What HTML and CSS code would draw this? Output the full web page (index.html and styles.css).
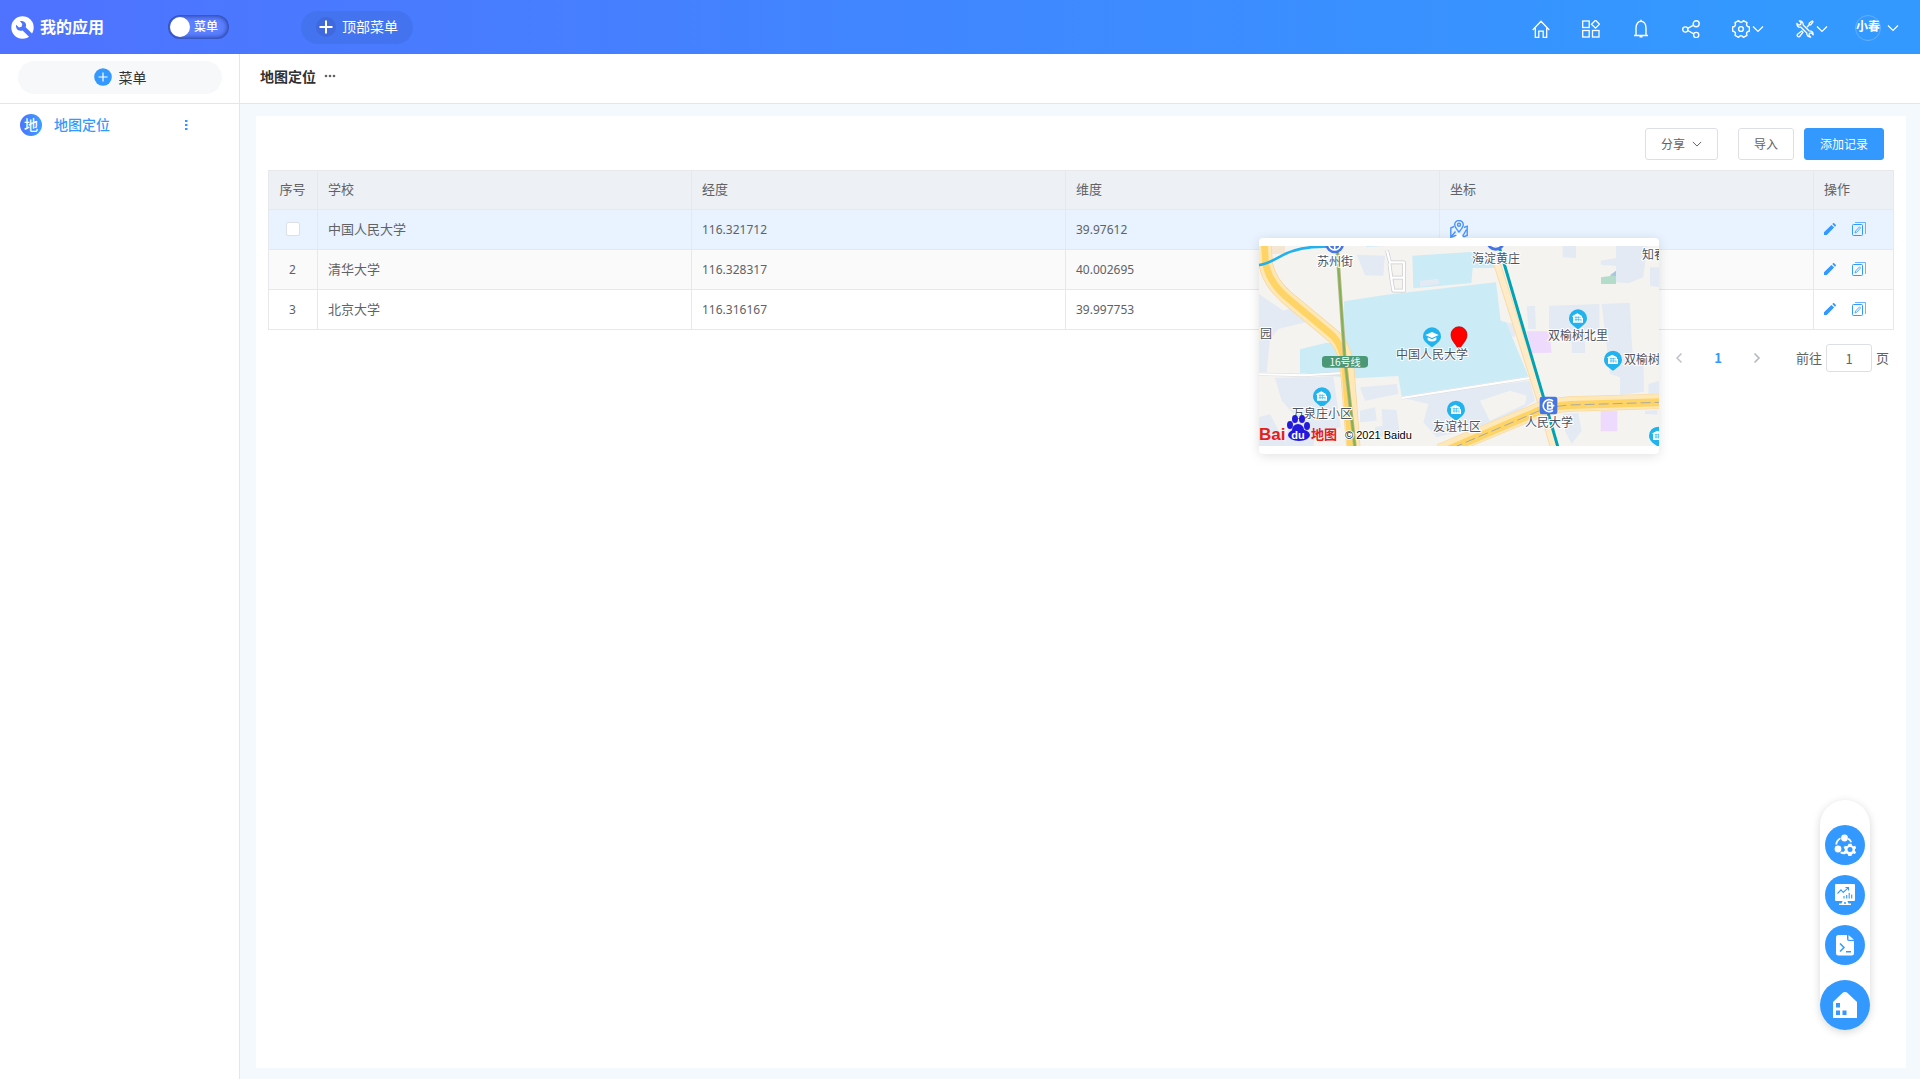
FILE: index.html
```html
<!DOCTYPE html>
<html lang="zh-CN">
<head>
<meta charset="utf-8">
<title>我的应用</title>
<link rel="stylesheet" href="styles.css">
</head>
<body>
<svg class="defs" aria-hidden="true">
  <symbol id="i-chevron" viewBox="0 0 12 12"><path d="M1 3.5 6 8.5 11 3.5" fill="none" stroke="currentColor" stroke-width="1.2"/></symbol>
  <symbol id="i-pencil" viewBox="0 0 12 12"><path d="M0 12V9.2L7.4 1.9 10.100 4.600 2.800 12zM8.300 1 9 .3Q9.600-.2 10.200.3L11.700 1.800Q12.200 2.400 11.700 3L11 3.700z" fill="currentColor"/></symbol>
  <symbol id="i-copy" viewBox="0 0 14 14"><g fill="none" stroke="currentColor"><path d="M3 .5h10.500v11.500" opacity=".7"/><rect x=".5" y="2.500" width="10" height="11" rx="1"/><path d="M3 11 3.600 9 7.500 4.800 8.600 5.900 4.800 10.200z" stroke-width=".8"/></g></symbol>
  <symbol id="i-build" viewBox="-28 -28 56 62"><path d="M-27 0A27 27 0 1 1 27 0C27 16 12 24 0 33-12 24-27 16-27 0z" fill="#22b3ee"/><path d="M-17-7-2-15 12-7V-2H15V13H-15V-5H-17z" fill="#fff"/><path d="M-10-3H8M-10 4H8M-6-6V9M1-6V9M9 2V9" stroke="#22b3ee" stroke-width="2"/></symbol>
</svg>

<header class="topbar">
  <div class="brand">
    <svg width="23" height="23" viewBox="0 0 23 23"><circle cx="11.500" cy="11.500" r="11.200" fill="#fff"/><path d="M9 5.200C11.500 4.300 14.500 5.700 15 8.600Q15.200 10 14.700 11.200L22 18.500 18.800 21.600 11.600 14.500C8.500 15.700 5.200 13.500 5 10.400Q5 9.500 5.200 8.700L8 11.400 10.600 10.700 11.300 8z" fill="#4e74ff"/></svg>
    <span class="brand-name">我的应用</span>
  </div>
  <button class="toggle" type="button"><span class="knob"></span><span class="label">菜单</span></button>
  <button class="top-menu" type="button">
    <span class="plus-dark"><svg width="14" height="14" viewBox="0 0 14 14"><path d="M7 .5v13M.5 7h13" stroke="#fff" stroke-width="2"/></svg></span><span class="label">顶部菜单</span>
  </button>
  <nav class="tools">
    <button type="button" aria-label="首页"><svg width="18" height="20" viewBox="0 0 18 20"><path d="M.7 11 9 2.200 17.300 11M3.300 9V18.300H6.800V12.200H11.200V18.300H14.700V9" fill="none" stroke="#fff" stroke-width="1.300"/></svg></button>
    <button type="button" aria-label="应用"><svg width="18" height="18" viewBox="0 0 18 18"><g fill="none" stroke="#fff" stroke-width="1.300"><rect x=".7" y="1" width="6.500" height="6.500"/><rect x=".7" y="10.500" width="6.500" height="6.500"/><rect x="10.500" y="10.500" width="6.500" height="6.500"/><path d="M13.500.2 17.500 4.200 13.500 8.200 9.500 4.200z"/></g></svg></button>
    <button type="button" aria-label="通知"><svg width="18" height="20" viewBox="0 0 18 20"><path d="M4 16V9C4 0 14 0 14 9V16M2 16.500H16M9 .8V3M7.500 17.800H10.500" fill="none" stroke="#fff" stroke-width="1.400"/></svg></button>
    <button type="button" aria-label="分享"><svg width="18" height="18" viewBox="0 0 18 18"><g fill="none" stroke="#fff" stroke-width="1.400"><circle cx="3.300" cy="9.500" r="2.600"/><circle cx="14.200" cy="3.800" r="3"/><circle cx="14.200" cy="15" r="2.600"/><path d="M5.700 8.300 11.600 5.200M5.800 10.500 11.800 13.800"/></g></svg></button>
    <button type="button" aria-label="设置"><svg width="18" height="18" viewBox="0 0 18 18"><path d="M11.400.7 15 2.700Q13.500 6.300 17.400 7V11Q13.500 11.700 15 15.300L11.400 17.300Q9 14.200 6.600 17.300L3 15.300Q4.500 11.700.6 11V7Q4.500 6.300 3 2.700L6.600.7Q9 3.800 11.400.7z" fill="none" stroke="#fff" stroke-width="1.400" stroke-linejoin="round"/><circle cx="9" cy="9" r="2.400" fill="none" stroke="#fff" stroke-width="1.400"/></svg><svg width="12" height="12"><use href="#i-chevron"/></svg></button>
    <button type="button" aria-label="工具"><svg width="18" height="18" viewBox="0 0 18 18"><g fill="none" stroke="#fff" stroke-width="1.300" stroke-linejoin="round"><path d="M3.300.9 5.200 2.800 4.600 4.600 2.800 5.200.9 3.400Q.5 7.500 5 7.200L10.800 13Q10.800 17.300 14.700 17.100L12.900 15.300 13.400 13.400 15.300 12.900 17.100 14.700Q17.400 10.700 13 10.800L7.200 5Q7.200.8 3.300.9z"/><path d="M11 7.200 13.200 4.800V3.300L16.200 1 17 1.800 14.700 4.800H13.200"/><path d="M5.800 11 7 12.200 3.700 16.500Q2.600 17.400 1.600 16.400 .6 15.400 1.500 14.300z"/></g></svg><svg width="12" height="12"><use href="#i-chevron"/></svg></button>
  </nav>
  <button class="user" type="button"><span class="avatar">小春</span><svg width="12" height="12"><use href="#i-chevron"/></svg></button>
</header>

<div class="layout">
  <aside class="sidebar">
    <div class="side-head">
      <button class="add-menu" type="button"><svg width="18" height="18" viewBox="0 0 18 18"><circle cx="9" cy="9" r="8.800" fill="#39f"/><path d="M9 4.500v9M4.500 9h9" stroke="#fff" stroke-width="1.200"/></svg>菜单</button>
    </div>
    <div class="side-item">
      <span class="side-badge">地</span>
      <a href="#map">地图定位</a>
      <button class="plain" type="button" aria-label="更多"><svg width="4" height="12" viewBox="0 0 4 12"><g fill="#39f"><rect x="1" y="1" width="2.500" height="2"/><rect x="1" y="5" width="2.500" height="2"/><rect x="1" y="9" width="2.500" height="2"/></g></svg></button>
    </div>
  </aside>

  <main class="main">
    <div class="tabbar">
      <h1>地图定位</h1>
      <button class="plain" type="button" aria-label="更多"><svg width="12" height="4" viewBox="0 0 12 4"><g fill="#606266"><circle cx="2" cy="2" r="1.300"/><circle cx="6" cy="2" r="1.300"/><circle cx="10" cy="2" r="1.300"/></g></svg></button>
    </div>
    <div class="content">
      <section class="card" id="map">
        <div class="actions">
          <button class="btn share" type="button">分享<svg width="10" height="10"><use href="#i-chevron"/></svg></button>
          <button class="btn" type="button">导入</button>
          <button class="btn primary" type="button">添加记录</button>
        </div>
        <table class="grid">
          <colgroup><col class="c-no"><col><col><col><col><col class="c-op"></colgroup>
          <thead><tr><th class="no">序号</th><th>学校</th><th>经度</th><th>维度</th><th>坐标</th><th>操作</th></tr></thead>
          <tbody>
            <tr class="hover">
              <td class="no"><input type="checkbox" aria-label="选择第1行"></td><td>中国人民大学</td><td class="num">116.321712</td><td class="num">39.97612</td>
              <td><div class="locate">
                <svg class="loc-icon" width="18" height="18" viewBox="0 0 18 18"><g fill="none" stroke="#4b93ff" stroke-width="1.400"><path d="M9 12C6.500 9 4.700 7 4.700 4.800A4.300 4.300 0 0 1 13.300 4.800C13.300 7 11.500 9 9 12z"/><circle cx="9" cy="4.800" r="1.500"/><path d="M4 6.500.8 8V17.300L5.500 15.500 12 17.300 17.200 15.500V6.200L14 7.500M1 17 5.500 11.500M12.500 16.500 16.500 9.500"/></g></svg>
                <div class="popover">
                  <svg class="map" width="400" height="200" viewBox="0 0 400 200">
                    <svg width="400" height="200" viewBox="27 96 1200 600">
                      <path d="M27 96h1200v600H27z" fill="#f4f3ef"/>
                      <path d="M27 240 100 290 140 275 185 320 85 345 60 375 50 475H27zM320 122 405 125 400 185 345 184zM75 492 250 487 272 640 200 655 190 696H100L130 600 95 560zM27 610 60 600 110 696H27zM330 590 375 580 380 620 330 625zM395 585 440 588 450 665 375 670 375 640 398 635zM330 520 440 510 445 540 345 560zM450 550 840 500 855 560 790 600 680 640 560 670 520 625 535 570zM830 277 855 275 858 345 835 345zM765 325 795 330 795 368 770 365zM897 275 1048 270V345L897 352zM1055 270 1140 266 1145 375 1148 416 1180 418 1182 533 1110 543 1110 490 1080 480zM938 96H978V132L938 130zM1098 96 1190 96 1185 150 1180 190 1135 208 1098 205zM1052 140 1098 132V156L1052 152zM1200 160H1227V220L1200 215zM965 360H1005V417H965zM1195 510 1227 500V542H1195zM940 600 985 598 995 650 965 690 945 650zM1185 590 1222 588V602L1185 600z" fill="#e4eaf3"/>
                      <path d="M65 96H105V120H65z" fill="#f5e6d4"/>
                      <path d="M690 560 780 530 830 545 825 570 720 620 705 590z" fill="#f4f3ef"/>
                      <path d="M282 262 410 242 738 205 752 320 768 325 835 487 455 547 445 486 315 493 150 476V406L230 386 284 390zM487 125 660 114 745 125 755 162 668 162 664 207 490 223zM350 96 400 96 350 99z" fill="#cbebf6"/>
                      <path d="M510 200 565 194 568 210 510 218z" fill="#e4eaf3"/>
                      <path d="M1053 190 1080 186 1098 172V210H1053z" fill="#b3dccb"/><path d="M1080 184 1098 170V186z" fill="#a8c5df"/>
                      <path d="M830 352H898L905 416 845 417zM1052 590H1102V652H1052z" fill="#eedafc"/>
                      <path d="M27 481 165 484 280 477M455 552 840 492" fill="none" stroke="#d9dbdf" stroke-width="9"/><path d="M27 481 165 484 280 477M455 552 840 492" fill="none" stroke="#fff" stroke-width="6"/>
                      <g fill="none" stroke-linejoin="round"><path d="M411 110 420 145H462V230H430L425 200 418 148M422 191H462" stroke="#c9cbd0" stroke-width="11"/><path d="M411 110 420 145H462V230H430L425 200 418 148M422 191H462" stroke="#fff" stroke-width="7"/></g>
                      <g fill="none">
                        <path d="M43 90 47 150Q58 205 110 250L240 358Q285 390 292 470L310 700" stroke="#f8d396" stroke-width="43"/><path d="M43 90 47 150Q58 205 110 250L240 358Q285 390 292 470L310 700" stroke="#ffe8b8" stroke-width="39"/><path d="M43 90 47 150Q58 205 110 250L240 358Q280 390 285 470L302 700" stroke="#ffd466" stroke-width="20"/>
                        <path d="M735 130 868 548 910 696" stroke="#f9dcaa" stroke-width="23"/><path d="M735 130 868 548 910 696" stroke="#ffebc8" stroke-width="17"/>
                        <path d="M570 712 850 595Q890 575 960 570L1227 562" stroke="#f9d9a0" stroke-width="46"/><path d="M570 712 850 595Q890 575 960 570L1227 562" stroke="#ffe8b8" stroke-width="42"/><path d="M570 718 850 598Q890 578 960 573L1227 565" stroke="#ffd466" stroke-width="24"/><path d="M570 718 850 598Q890 578 960 573L1227 565" stroke="#a8aaa4" stroke-width="3" stroke-dasharray="30 12"/>
                        <path d="M262 110 284 430 315 700" stroke="#bcb58d" stroke-width="11"/><path d="M262 110 284 430 315 700" stroke="#82b351" stroke-width="6"/>
                        <path d="M748 100 880 548 924 700" stroke="#00a3b4" stroke-width="9"/>
                        <path d="M27 153Q45 153 90 128 140 98 220 98H250" stroke="#22b1ec" stroke-width="8"/>
                      </g>
                      <g fill="#4575e2"><circle cx="254" cy="90" r="28"/><circle cx="737" cy="82" r="28"/><rect x="869" y="548" width="53" height="53" rx="7"/></g>
                      <g fill="none" stroke="#fff" stroke-width="5"><path d="M236 92Q240 108 254 108T272 92M254 92V108M720 90Q737 108 754 90M909 561A18 18 0 1 0 909 589M893 565V585H902A5 5 0 0 0 902 575H893M893 565H901A5 5 0 0 1 901 575H913"/></g>
                      <rect x="216" y="426" width="138" height="35" rx="10" fill="#4b9876"/>
                      <g><use href="#i-build" x="188" y="519" width="56" height="62"/><use href="#i-build" x="590" y="559" width="56" height="62"/><use href="#i-build" x="956" y="285" width="56" height="62"/><use href="#i-build" x="1061" y="409" width="56" height="62"/><use href="#i-build" x="1196" y="637" width="56" height="62"/></g>
                      <path d="M519 367A27 27 0 1 1 573 367C573 383 558 391 546 400 534 391 519 383 519 367z" fill="#22b3ee"/><path d="M526 363 546 354 566 363 546 372zM533 370 546 376 559 370V378Q546 387 533 378z" fill="#fff"/>
                      <path d="M627 411C620 390 603 382 603 362A24 24 0 0 1 651 362C651 382 634 390 627 411z" fill="red" stroke="#a00" stroke-width="2"/>
                    </svg>
                    <g class="labels">
                      <text x="58" y="20">苏州街</text><text x="213" y="17">海淀黄庄</text><text x="383" y="13">知春</text><text x="1" y="92">园</text>
                      <text x="137" y="113">中国人民大学</text><text x="33" y="172">万泉庄小区</text><text x="174" y="185">友谊社区</text><text x="289" y="94">双榆树北里</text>
                      <text x="365" y="118">双榆树</text><text x="266" y="181">人民大学</text>
                    </g>
                    <text class="line-no" x="86" y="120">16号线</text>
                    <g fill="#2319dc"><ellipse cx="40" cy="189" rx="11" ry="6"/><ellipse cx="39" cy="184" rx="6" ry="6"/><ellipse cx="31" cy="179" rx="3" ry="4"/><ellipse cx="36" cy="173" rx="3" ry="4"/><ellipse cx="43" cy="173" rx="3" ry="4"/><ellipse cx="48" cy="180" rx="3" ry="4"/></g>
                    <text class="logo" x="0" y="194">Bai</text><text class="logo-du" x="39" y="193">du</text><text class="logo-cn" x="52" y="193">地图</text>
                    <text class="copy" x="86" y="193">© 2021 Baidu</text>
                  </svg>
                </div>
              </div></td>
              <td><div class="ops"><button class="plain" type="button" aria-label="编辑"><svg width="12" height="12"><use href="#i-pencil"/></svg></button><button class="plain" type="button" aria-label="复制"><svg width="14" height="14"><use href="#i-copy"/></svg></button></div></td>
            </tr>
            <tr class="stripe">
              <td class="no num">2</td><td>清华大学</td><td class="num">116.328317</td><td class="num">40.002695</td><td></td>
              <td><div class="ops"><button class="plain" type="button" aria-label="编辑"><svg width="12" height="12"><use href="#i-pencil"/></svg></button><button class="plain" type="button" aria-label="复制"><svg width="14" height="14"><use href="#i-copy"/></svg></button></div></td>
            </tr>
            <tr>
              <td class="no num">3</td><td>北京大学</td><td class="num">116.316167</td><td class="num">39.997753</td><td></td>
              <td><div class="ops"><button class="plain" type="button" aria-label="编辑"><svg width="12" height="12"><use href="#i-pencil"/></svg></button><button class="plain" type="button" aria-label="复制"><svg width="14" height="14"><use href="#i-copy"/></svg></button></div></td>
            </tr>
          </tbody>
        </table>
        <div class="pager">
          <button class="plain" type="button" aria-label="上一页"><svg width="8" height="12" viewBox="0 0 8 12"><path d="M6.500 1.500 2 6 6.500 10.500" fill="none" stroke="#c0c4cc" stroke-width="1.600"/></svg></button>
          <button class="plain current" type="button">1</button>
          <button class="plain" type="button" aria-label="下一页"><svg width="8" height="12" viewBox="0 0 8 12"><path d="M1.500 1.500 6 6 1.500 10.500" fill="none" stroke="#b4b8c0" stroke-width="1.600"/></svg></button>
          <label class="jump">前往<input type="text" value="1">页</label>
        </div>
      </section>
    </div>
  </main>
</div>

<div class="dock">
  <button type="button" aria-label="流程"><svg width="22" height="22" viewBox="0 0 22 22"><g fill="#fff"><circle cx="10.500" cy="4" r="3.400"/><circle cx="4" cy="15" r="3.400"/><path d="M6.300 3.500 6.800 5Q3.500 7 3.200 10.500H1.300Q1.800 5.500 6.300 3.500zM14.500 3.800Q17 5.200 18 8L16.500 8.600Q15.500 6.500 13.800 5.600zM7.500 17.500Q9 18.300 11 18.300V20.300Q8 20.500 6 19z"/><path d="M14.500 9.700h3l.5 1.700 1.500.8 1.700-.4 1 2.300-1.300 1.200v1.600l1.200 1.200-1.100 2-1.800-.5-1.300.8-.5 1.600h-3l-.6-1.700-1.400-.8-1.700.5-1.200-2.200 1.300-1.300v-1.500l-1.200-1.200 1.300-2.100 1.700.5 1.300-.8z"/></g><circle cx="16" cy="15.600" r="2.500" fill="#39f"/></svg></button>
  <button type="button" aria-label="报表"><svg width="22" height="22" viewBox="0 0 22 22"><path d="M2 0H20Q21 0 21 1V16Q21 17 20 17H13.500L14.500 19.500H17V21H5V19.500H7.500L8.500 17H2Q1 17 1 16V1Q1 0 2 0z" fill="#fff"/><path d="M3.500 9.500 7 5.800 9.300 8.500 14 3.800M11.500 3.500H14.500V6.500M10 14.500V12M12.700 14.500V11M15.200 14.500V9M17.700 14.500V10.500" fill="none" stroke="#39f" stroke-width="1.100"/><circle cx="11" cy="19" r="1" fill="#39f"/></svg></button>
  <button type="button" aria-label="脚本"><svg width="22" height="22" viewBox="0 0 22 22"><path d="M4.500 1H13V5Q13 7 15 7H20V19Q20 21.500 17.500 21.500H4.500Q2 21.500 2 19V3.500Q2 1 4.500 1zM14.500 1 20 5.800H14.500z" fill="#fff"/><path d="M6 9.500 10 13.500 6 17.500M12 17.700H17" fill="none" stroke="#39f" stroke-width="1.500"/></svg></button>
  <button class="home" type="button" aria-label="主页"><svg width="26" height="28" viewBox="0 0 26 28"><path d="M1 11 11 1.500Q13 .3 15 1.500L25 11V27H1z" fill="#fff"/><path d="M4 12h4v4.500H4zM4 19.500h4V24H4zM10.500 19.500h4V24h-4z" fill="#39f"/></svg></button>
</div>
</body>
</html>
```
FILE: styles.css
```css
* { box-sizing: border-box; }
body {
  margin: 0;
  min-height: 100vh;
  display: flex;
  flex-direction: column;
  font: 14px/20px "Noto Sans CJK SC", sans-serif;
  color: #303133;
}
button { font: inherit; border: 0; padding: 0; cursor: pointer; }
svg { display: block; flex: none; }
.defs { position: absolute; width: 0; height: 0; }
.plain { background: none; color: #39f; }

.topbar {
  display: flex;
  align-items: center;
  height: 54px;
  padding: 0 21px 0 11px;
  background: linear-gradient(90deg, #4f72ff 0%, #39f 92%);
  color: #fff;
}
.brand { display: flex; align-items: center; gap: 6px; width: 157px; }
.brand-name { padding-bottom: 2px; font-size: 16px; font-weight: 700; }
.label { padding-bottom: 2px; }
.toggle {
  display: flex;
  align-items: center;
  gap: 4px;
  width: 61px;
  height: 24px;
  padding: 0 2px;
  margin-right: 72px;
  border-radius: 12px;
  background: #5b7fff;
  box-shadow: inset 0 0 5px 1px #1f3a99;
  color: #fff;
  font-size: 12px;
  font-weight: 500;
}
.knob { width: 20px; height: 20px; border-radius: 50%; background: #fff; }
.top-menu {
  display: flex;
  align-items: center;
  gap: 6px;
  height: 33px;
  padding: 0 15px;
  border-radius: 17px;
  background: #4473f0;
  color: #fff;
}
.plus-dark {
  display: grid;
  place-items: center;
  width: 20px;
  height: 20px;
  border-radius: 50%;
  background: #3f69dc;
}
.tools { display: flex; gap: 32px; margin-left: auto; padding-top: 3px; }
.tools button, .user { display: flex; align-items: center; background: none; color: #fff; }
.tools button { gap: 2px; height: 24px; }
.user { gap: 6px; margin-left: 27px; padding-top: 2px; }
.avatar {
  width: 26px;
  height: 26px;
  border: 1px solid #66b0ff;
  border-radius: 50%;
  font-size: 12px;
  font-weight: 700;
  line-height: 20px;
  white-space: nowrap;
}

.layout { display: flex; flex: 1; }
.sidebar { width: 240px; border-right: 1px solid #e4e7ea; }
.side-head { height: 50px; padding: 7px 17px 0 18px; border-bottom: 1px solid #e4e7ea; }
.add-menu {
  display: flex;
  align-items: center;
  justify-content: center;
  gap: 7px;
  width: 100%;
  height: 33px;
  padding-bottom: 1px;
  border-radius: 17px;
  background: #f6f8fa;
  color: #303133;
}
.side-item { display: flex; align-items: center; height: 42px; padding: 0 51px 0 20px; }
.side-item a { flex: 1; padding-bottom: 2px; color: #39f; font-weight: 500; text-decoration: none; }
.side-badge {
  width: 22px;
  height: 22px;
  margin-right: 12px;
  border-radius: 50%;
  background: linear-gradient(90deg, #4f72ff, #39a0ff);
  color: #fff;
  font-weight: 500;
  line-height: 20px;
  text-align: center;
}

.main { display: flex; flex-direction: column; flex: 1; min-width: 0; }
.tabbar {
  display: flex;
  align-items: center;
  gap: 8px;
  height: 50px;
  padding: 0 20px 6px;
  border-bottom: 1px solid #e4e7ea;
}
.tabbar h1 { margin: 0; font-size: 14px; font-weight: 700; }
.content { display: flex; flex: 1; padding: 12px 14px 11px 16px; background: #f4f9fe; }
.card { flex: 1; min-width: 0; padding: 12px; background: #fff; }

.actions { display: flex; justify-content: flex-end; margin: 0 10px 10px 0; }
.btn {
  height: 32px;
  padding: 0 15px 1px;
  border: 1px solid #dcdfe6;
  border-radius: 3px;
  background: #fff;
  color: #606266;
  font-size: 12px;
}
.share { display: flex; align-items: center; gap: 7px; margin-right: 20px; }
.primary { margin-left: 10px; border-color: #39f; background: #39f; color: #fff; }

.grid { width: 100%; table-layout: fixed; border-collapse: collapse; font-size: 13px; color: #606266; }
.c-no { width: 49px; }
.c-op { width: 80px; }
.grid th, .grid td {
  height: 40px;
  padding: 0 10px 1px;
  border: 1px solid #e6e8eb;
  font-weight: 400;
  text-align: left;
}
.grid th { height: 39px; padding-bottom: 2px; background: #edf0f5; }
.grid .no { padding-left: 0; padding-right: 1px; text-align: center; }
.grid .num { padding-bottom: 0; font-family: "Noto Sans", "Noto Sans CJK SC", sans-serif; font-size: 12px; }
.hover { background: #e8f3ff; }
.stripe { background: #fafafa; }
.grid input {
  appearance: none;
  display: block;
  width: 14px;
  height: 14px;
  margin: 0 auto;
  border: 1px solid #dcdfe6;
  border-radius: 2px;
  background: #fff;
}
.ops { display: flex; align-items: center; gap: 16px; }

.locate { position: relative; width: 18px; }
.popover {
  position: absolute;
  z-index: 2;
  top: 18px;
  left: -191px;
  padding: 8px 0;
  border-radius: 4px;
  background: #fff;
  box-shadow: 0 2px 12px rgba(0, 0, 0, 0.12);
}
.popover::before {
  content: "";
  position: absolute;
  top: -5px;
  left: 195px;
  border: 5px solid transparent;
  border-top: 0;
  border-bottom-color: #fff;
}
.map { overflow: hidden; }
.labels { font-size: 12px; fill: #4c5362; stroke: #fff; stroke-width: 2px; paint-order: stroke; }
.line-no { font-size: 10px; fill: #fff; text-anchor: middle; }
.logo { font: 700 17px "Liberation Sans", sans-serif; fill: #e0201b; }
.logo-du { font: 700 11px "Liberation Sans", sans-serif; fill: #fff; text-anchor: middle; }
.logo-cn { font-size: 13px; font-weight: 700; fill: #e0201b; }
.copy { font: 11px "Liberation Sans", sans-serif; fill: #000; stroke: #fff; stroke-width: 2px; paint-order: stroke; }

.pager { display: flex; align-items: center; justify-content: flex-end; gap: 31px; padding: 14px 5px; font-size: 13px; color: #606266; }
.current { font-weight: 700; }
.jump { display: flex; align-items: center; gap: 4px; margin-left: 4px; }
.jump input {
  width: 46px;
  height: 28px;
  padding: 0;
  border: 1px solid #dcdfe6;
  border-radius: 3px;
  color: #606266;
  font: inherit;
  text-align: center;
}

.dock {
  position: fixed;
  right: 50px;
  bottom: 49px;
  display: flex;
  flex-direction: column;
  align-items: center;
  gap: 10px;
  width: 50px;
  padding-top: 25px;
  border-radius: 25px;
  background: #fff;
  box-shadow: 0 2px 8px rgba(0, 0, 0, 0.16);
}
.dock button { display: grid; place-items: center; width: 40px; height: 40px; border-radius: 50%; background: #39f; }
.dock .home { width: 50px; height: 50px; margin-top: 5px; }
```
